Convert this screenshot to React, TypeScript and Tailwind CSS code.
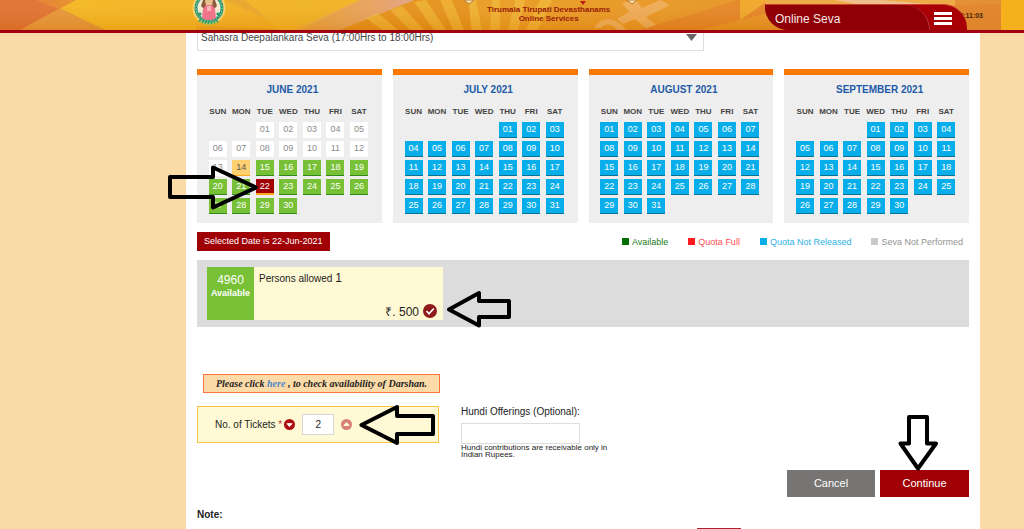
import { FC, useState } from "react";
import clsx from "clsx";

type DayStatus = "none" | "today" | "open" | "selected" | "unreleased";

interface Month {
  name: string;
  offset: number;
  days: number;
}

const weekDays = ["SUN", "MON", "TUE", "WED", "THU", "FRI", "SAT"];

const months: Month[] = [
  { name: "JUNE 2021", offset: 2, days: 30 },
  { name: "JULY 2021", offset: 4, days: 31 },
  { name: "AUGUST 2021", offset: 0, days: 31 },
  { name: "SEPTEMBER 2021", offset: 3, days: 30 },
];

const dayStyles: Record<DayStatus, string> = {
  none: "border-b bg-white text-[#8c8c8c] border-white",
  today: "border-b bg-[#ffcf70] text-[#555] border-[#fba61c]",
  open: "border-b bg-[#78c136] text-white border-[#2f8a1c]",
  selected: "border-b-2 bg-[#a00005] text-white border-[#fba61c]",
  unreleased: "border-b bg-[#08aeea] text-white border-[#0b7296]",
};

const legend = [
  { label: "Available", box: "bg-[#007000]", text: "text-[#207a20]" },
  { label: "Quota Full", box: "bg-[#ff1a20]", text: "text-[#ff4a50]" },
  { label: "Quota Not Released", box: "bg-[#08aeea]", text: "text-[#2fb2e6]" },
  { label: "Seva Not Performed", box: "bg-[#c9c9c9]", text: "text-[#939393]" },
];

const getStatus = (month: number, day: number, selected: number): DayStatus => {
  if (month > 0) return "unreleased";
  if (day === selected) return "selected";
  if (day < 14) return "none";
  return day === 14 ? "today" : "open";
};

interface ArrowProps {
  className: string;
  viewBox: string;
  points: string;
}

const Arrow: FC<ArrowProps> = ({ className, viewBox, points }) => (
  <svg
    className={clsx("pointer-events-none absolute z-10", className)}
    viewBox={viewBox}
    fill="none"
    stroke="#000"
    strokeWidth="4"
    strokeLinejoin="round"
    aria-hidden="true"
  >
    <polygon points={points} />
  </svg>
);

const HeaderArt = () => (
  <svg
    className="absolute inset-0 h-full w-full"
    viewBox="0 0 1024 30"
    preserveAspectRatio="none"
    aria-hidden="true"
  >
    <defs>
      <linearGradient id="sky" x1="0" x2="1" y1="0" y2="0">
        <stop offset="0" stopColor="#e0702a" />
        <stop offset="0.07" stopColor="#e58a25" />
        <stop offset="0.14" stopColor="#efa51c" />
        <stop offset="0.3" stopColor="#e9a01c" />
        <stop offset="0.55" stopColor="#e8971c" />
        <stop offset="1" stopColor="#e38a22" />
      </linearGradient>
      <linearGradient id="pink" x1="0" x2="1" y1="0" y2="0">
        <stop offset="0" stopColor="#e9a060" stopOpacity="0.2" />
        <stop offset="1" stopColor="#e3a080" />
      </linearGradient>
      <linearGradient id="shade" x1="0" x2="0" y1="0" y2="1">
        <stop offset="0" stopColor="#fff" stopOpacity="0.06" />
        <stop offset="1" stopColor="#c05a00" stopOpacity="0.18" />
      </linearGradient>
    </defs>
    <rect width="1024" height="30" fill="url(#sky)" />
    <polygon points="0,0 35,0 62,10 20,30 0,30" fill="#df6f2c" />
    <polygon points="76,0 196,0 196,30 105,30 52,13" fill="#f3b51a" />
    <polygon points="60,8 105,30 20,30" fill="#e69433" />
    <polygon points="90,0 226,0 300,30 190,26" fill="#f2b21a" opacity="0.8" />
    <polygon points="222,0 300,0 366,30 292,30" fill="#e8a32a" opacity="0.6" />
    <polygon points="245,0 360,0 300,30 280,30" fill="#f3b81c" opacity="0.7" />
    <polygon points="360,0 415,0 340,30 292,30" fill="url(#pink)" />
    <polygon points="415,0 470,0 470,30 340,30" fill="#e38f14" />
    <g fill="#f4bd35" opacity="0.6">
      <polygon points="366,18 378,13 398,30 382,30" />
      <polygon points="390,10 402,6 424,30 410,30" />
      <polygon points="414,2 426,0 446,30 434,30" />
      <polygon points="440,0 452,0 464,30 453,30" />
      <polygon points="468,0 476,0 482,30 472,30" />
      <polygon points="492,0 500,0 500,30 490,30" />
      <polygon points="515,0 525,0 518,30 508,30" />
      <polygon points="540,0 552,0 538,30 526,30" />
    </g>
    <path
      d="M594 28c6-10 18-12 28-3l4 5h-9c-6-7-12-7-16-2zM622 3l14-3 6 8 18-8 10 5-24 12 10 8-9 4-12-10-12 5-6-5 12-7z"
      fill="#f0b262"
      opacity="0.75"
    />
    <polygon points="738,0 790,0 765,14 700,30 640,30" fill="#e37c20" opacity="0.7" />
    <polygon points="740,0 768,0 752,12 740,20" fill="#f4b423" opacity="0.7" />
    <polygon points="765,0 1001,0 1001,4 765,10" fill="#eda53a" />
    <polygon points="835,0 880,0 930,4 855,4" fill="#efbb86" />
    <rect width="1001" height="30" fill="url(#shade)" />
    <rect x="955" y="0" width="46" height="30" fill="#df8430" opacity="0.7" />
    <rect x="1001" width="23" height="30" fill="#f4b11d" />
    <path d="m464 0 5 4 5-4z" fill="#fbe3b0" stroke="#b57a2a" strokeWidth="1" />
    <path d="m627 0 5 4 5-4z" fill="#fbe3b0" stroke="#b57a2a" strokeWidth="1" />
    <path d="m580 1 3 4 3-4z" fill="#b81d10" />
  </svg>
);

const Emblem = () => (
  <svg className="absolute left-[192px] top-0 h-[25px] w-[34px]" viewBox="0 0 34 25" aria-hidden="true">
    <circle cx="17" cy="8" r="16.5" fill="#f7dc8e" opacity="0.75" />
    <circle cx="17" cy="8" r="13" fill="#f4ead2" stroke="#2f9a72" strokeWidth="3" />
    <circle cx="17" cy="8" r="13" fill="none" stroke="#cfe6d0" strokeWidth="1" strokeDasharray="1 2" />
    <path d="M11 0h12l2 6-3 3H12L9 6z" fill="#8c5a3c" />
    <path d="M13 0h8l-1 6h-6z" fill="#e7c08e" />
    <path d="M14 5h6l3 4 1 9-4 2h-6l-4-2 1-9z" fill="#f0748a" />
    <path d="M15 6h4v5h-4z" fill="#f9b4b8" />
    <path d="M8 12l2 2-2 2-2-2zM26 12l2 2-2 2-2-2z" fill="#2f9a72" />
    <path d="M7 20q10 6 20 0" fill="none" stroke="#3fa566" strokeWidth="3" strokeDasharray="2 1" />
  </svg>
);

const Header = () => (
  <header className="fixed inset-x-0 top-0 z-20 h-[33px] border-b-3 border-[#a0000f] bg-[#e8971c]">
    <HeaderArt />
    <Emblem />
    <div className="absolute left-[487px] top-[5px] text-center text-[8px] leading-[9px] font-bold text-[#9a2008]">
      Tirumala Tirupati Devasthanams
      <br />
      Online Services
    </div>
    <span className="absolute right-[41px] top-[11px] text-[7px] leading-[10px] font-bold text-[#4a2408]">
      17:11:03
    </span>
    <nav className="absolute right-[57px] top-1 flex h-[26px] w-[202px] rounded-tr-[24px] rounded-bl-[24px] border-t border-[#c8402c] bg-[#a90006]">
      <a
        href="#seva"
        className="flex w-[165px] items-center rounded-tr-[26px] rounded-bl-[24px] border-r border-[#b8383a] bg-[#8e0006] pt-[2px] pl-[10px] text-[12px] text-[#f6e6e4]"
      >
        Online Seva
      </a>
      <button type="button" aria-label="Menu" className="ml-1 flex w-[18px] flex-col justify-center gap-[2px] pt-[2px]">
        <span className="h-[3px] w-full bg-white" />
        <span className="h-[3px] w-full bg-white" />
        <span className="h-[3px] w-full bg-white" />
      </button>
    </nav>
  </header>
);

interface CalendarProps {
  month: Month;
  index: number;
  selected: number;
  onSelect: (day: number) => void;
}

const Calendar: FC<CalendarProps> = ({ month, index, selected, onSelect }) => {
  const rows = Array.from({ length: 5 }, (_, r) =>
    weekDays.map((_, c) => {
      const day = r * 7 + c - month.offset + 1;
      return day > 0 && day <= month.days ? day : null;
    })
  );

  return (
    <section className="border-t-6 border-[#ff7800] bg-[#eee] pt-2 pr-[11px] pb-2 pl-[9px]">
      <h2 className="pl-2 text-center text-[10px] leading-[14px] font-bold text-[#1e5aa8]">{month.name}</h2>
      <table className="mt-[7px] w-full table-fixed border-collapse">
        <thead>
          <tr className="h-4">
            {weekDays.map((name) => (
              <th key={name} className="p-0 text-center text-[8px] leading-[14px] font-bold text-[#444]">
                {name}
              </th>
            ))}
          </tr>
        </thead>
        <tbody>
          {rows.map((row, r) => (
            <tr key={r} className="h-[19px]">
              {row.map((day, c) => (
                <td key={c} className="p-0 align-middle">
                  {day && (
                    <button
                      type="button"
                      onClick={() => getStatus(index, day, selected) === "open" && onSelect(day)}
                      className={clsx(
                        "mx-auto block h-4 w-[18px] text-[9px] leading-[15px]",
                        dayStyles[getStatus(index, day, selected)]
                      )}
                    >
                      {String(day).padStart(2, "0")}
                    </button>
                  )}
                </td>
              ))}
            </tr>
          ))}
        </tbody>
      </table>
    </section>
  );
};

const App = () => {
  const [selected, setSelected] = useState<number>(22);
  const [tickets, setTickets] = useState<number>(2);

  return (
    <div className="h-screen overflow-hidden bg-[#fadba7] font-['Liberation_Sans',Arial,sans-serif] text-black">
      <Header />
      <main className="mr-11 ml-[186px] h-full bg-white pt-6 pr-[11px] pl-[11px]">
        <div className="relative w-[507px]">
          <select
            aria-label="Seva"
            className="block h-[27px] w-full appearance-none border border-[#ddd] bg-white pl-[3px] text-[10px] text-[#444]"
          >
            <option>Sahasra Deepalankara Seva (17:00Hrs to 18:00Hrs)</option>
          </select>
          <svg
            className="pointer-events-none absolute top-[10px] right-[7px] h-[7px] w-[11px]"
            viewBox="0 0 11 7"
            aria-hidden="true"
          >
            <path d="M0 0h11L5.500 7z" fill="#666" />
          </svg>
        </div>

        <div className="relative mt-[18px] grid grid-cols-4 gap-[11px]">
          {months.map((month, i) => (
            <Calendar key={month.name} month={month} index={i} selected={selected} onSelect={setSelected} />
          ))}
          <Arrow
            className="top-24 -left-[29px] h-[46px] w-[92px]"
            viewBox="168 165 92 46"
            points="170,177 213,177 213,167.500 256,187.500 213,207.500 213,197 170,197"
          />
        </div>

        <div className="mt-[9px] flex items-center justify-between">
          <p className="bg-[#a00005] px-[7px] text-[9px] leading-[19px] text-white">
            Selected Date is {selected}-Jun-2021
          </p>
          <ul className="flex gap-5 pr-[6px]">
            {legend.map((item) => (
              <li key={item.label} className={clsx("flex items-center gap-[3px] text-[9px] leading-3", item.text)}>
                <span className={clsx("h-[7px] w-[7px]", item.box)} />
                {item.label}
              </li>
            ))}
          </ul>
        </div>

        <section className="relative mt-[9px] bg-[#dcdcdc] px-[10px] py-[7px]">
          <div className="flex h-[53px] w-[236px] bg-[#fffad5]">
            <div className="w-[47px] bg-[#78c136] pt-[7px] text-center text-white">
              <div className="text-[12px] leading-[13px]">4960</div>
              <div className="text-[9px] leading-3 font-bold">Available</div>
            </div>
            <div className="flex flex-1 flex-col justify-between pr-[6px] pl-[5px] text-[#222]">
              <p className="pt-1 text-[10px] leading-[14px]">
                Persons allowed <span className="text-[12px]">1</span>
              </p>
              <p className="flex items-start justify-end gap-1 text-[12px] leading-4">
                ₹. 500
                <svg className="h-[14px] w-[14px]" viewBox="0 0 14 14" aria-hidden="true">
                  <circle cx="7" cy="7" r="7" fill="#8f1a1c" />
                  <path d="m3.500 7 2.500 2.800 4.800-5.300" fill="none" stroke="#fff" strokeWidth="1.600" />
                </svg>
              </p>
            </div>
          </div>
          <Arrow
            className="top-[29px] left-[250px] h-10 w-[66px]"
            viewBox="447 289 66 40"
            points="449,309.500 479,293 479,301 509,301 509,317 479,317 479,325.500"
          />
        </section>

        <p className="mt-[47px] ml-[6px] w-[237px] border border-[#ff7340] bg-[#fddba9] text-center font-['Liberation_Serif',serif] text-[10px] leading-[17px] font-bold text-[#222] italic">
          Please click{" "}
          <a href="#darshan" className="text-[#4a86c8]">
            here
          </a>{" "}
          , to check availability of Darshan.
        </p>

        <div className="mt-[13px] flex items-start gap-[22px]">
          <div className="relative flex h-[37px] w-[242px] items-center border border-[#fbc444] bg-[#fffad5] pl-[17px]">
            <label htmlFor="tickets" className="text-[10px] text-[#222]">
              No. of Tickets <span className="text-[#c04040]">*</span>
            </label>
            <button
              type="button"
              aria-label="Fewer tickets"
              onClick={() => setTickets(Math.max(1, tickets - 1))}
              className="ml-[2px]"
            >
              <svg className="h-[11px] w-[11px]" viewBox="0 0 11 11" aria-hidden="true">
                <circle cx="5.500" cy="5.500" r="5.500" fill="#ad0c10" />
                <path d="M2.200 4.500 5.500 8l3.300-3.500q-3.300-1.200-6.600 0z" fill="#fff" />
              </svg>
            </button>
            <input
              id="tickets"
              value={tickets}
              readOnly
              className="ml-[7px] h-[21px] w-8 border border-[#d8d8d8] bg-white text-center text-[10px] text-[#222]"
            />
            <button
              type="button"
              aria-label="More tickets"
              onClick={() => setTickets(Math.min(2, tickets + 1))}
              className="ml-[7px]"
            >
              <svg className="h-[11px] w-[11px]" viewBox="0 0 11 11" aria-hidden="true">
                <circle cx="5.500" cy="5.500" r="5.500" fill="#d88078" />
                <path d="M2.200 6.500 5.500 3l3.300 3.500q-3.300 1.200-6.600 0z" fill="#fffad5" />
              </svg>
            </button>
            <Arrow
              className="-top-[3px] left-[161px] h-[42px] w-20"
              viewBox="359 404 80 42"
              points="361.500,425 397,407 397,416 433,416 433,434 397,434 397,443"
            />
          </div>
          <div>
            <label htmlFor="hundi" className="block text-[10px] leading-[11px] text-[#222]">
              Hundi Offerings (Optional):
            </label>
            <input id="hundi" className="mt-[6px] block h-[21px] w-[119px] border border-[#ddd] bg-white px-1 text-[10px]" />
            <p className="w-[150px] text-[8px] leading-[7px] text-[#222]">
              Hundi contributions are receivable only in Indian Rupees.
            </p>
          </div>
        </div>

        <div className="relative mt-3 flex justify-end gap-[5px] text-[11px] text-white">
          <button type="button" className="h-[27px] w-[88px] bg-[#777573]">
            Cancel
          </button>
          <button type="button" className="h-[27px] w-[89px] bg-[#a00005]">
            Continue
          </button>
          <Arrow
            className="-top-[56px] right-[30px] h-[58px] w-[42px]"
            viewBox="897 414 42 58"
            points="918,468.500 900.500,443.500 909,443.500 909,417 927,417 927,443.500 936,443.500"
          />
        </div>

        <h3 className="mt-3 text-[10px] leading-3 font-bold text-[#222]">Note:</h3>
        <div className="mt-[7px] ml-[500px] h-6 w-11 bg-[#b8202c]" />
      </main>
    </div>
  );
};

export default App;
